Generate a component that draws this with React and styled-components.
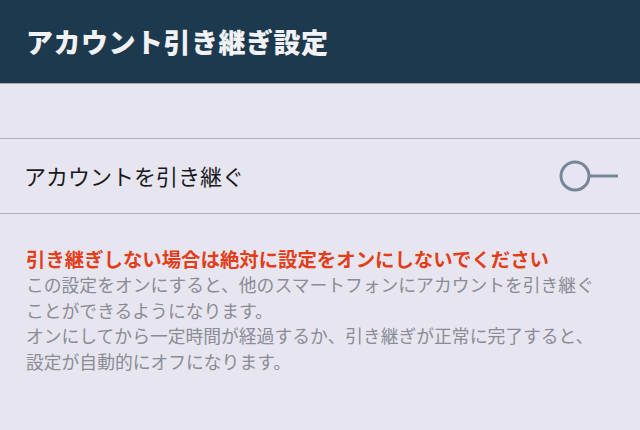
import React, { useState } from "react";
import styled, { createGlobalStyle } from "styled-components";

const GlobalStyle = createGlobalStyle`
  html, body {
    margin: 0;
    padding: 0;
    background: #e7e5ef;
  }
  body {
    font-family: "Noto Sans CJK JP", "Noto Sans", sans-serif;
  }
`;

const Page = styled.div`
  width: 640px;
  height: 430px;
  background: #e7e5ef;
  overflow: hidden;
`;

const Header = styled.header`
  height: 84px;
  background: #1c394d;
  border-bottom: 1px solid #a9a9b6;
  display: flex;
  align-items: center;
  padding: 0 26px;
  box-sizing: border-box;
`;

const Title = styled.h1`
  margin: 0;
  color: #f1f1f6;
  font-size: 27px;
  font-weight: 900;
  letter-spacing: 0.5px;
  line-height: 1;
`;

const Spacer = styled.div`
  height: 54px;
`;

const Row = styled.div`
  height: 74px;
  border-top: 1px solid #b3b3bf;
  border-bottom: 1px solid #b3b3bf;
  display: flex;
  align-items: center;
  justify-content: space-between;
  padding: 0 20px 0 24px;
`;

const Label = styled.span`
  color: #1a1a1e;
  font-size: 22px;
  font-weight: 400;
  line-height: 1;
  padding-bottom: 3px;
`;

const ToggleButton = styled.button`
  border: none;
  background: transparent;
  padding: 0;
  cursor: pointer;
  display: flex;
  align-items: center;
`;

const Notes = styled.div`
  padding: 33px 26px 0;
`;

const Warning = styled.p`
  margin: 0 0 1px;
  color: #e23e1a;
  font-size: 19.4px;
  font-weight: 700;
  line-height: 24px;
`;

const Body = styled.p`
  margin: 0;
  color: #8b8b96;
  font-size: 17.8px;
  line-height: 25.6px;
`;

const Toggle = ({ on, onClick }) => (
  <ToggleButton onClick={onClick} aria-pressed={on}>
    <svg width="62" height="34" viewBox="0 0 62 34">
      <circle cx="17" cy="17" r="14" fill="none" stroke="#77879a" strokeWidth="3" />
      <line x1="31" y1="17" x2="60" y2="17" stroke="#77879a" strokeWidth="3" />
    </svg>
  </ToggleButton>
);

export default function App() {
  const [on, setOn] = useState(false);
  return (
    <Page>
      <GlobalStyle />
      <Header>
        <Title>アカウント引き継ぎ設定</Title>
      </Header>
      <Spacer />
      <Row>
        <Label>アカウントを引き継ぐ</Label>
        <Toggle on={on} onClick={() => setOn(!on)} />
      </Row>
      <Notes>
        <Warning>引き継ぎしない場合は絶対に設定をオンにしないでください</Warning>
        <Body>
          この設定をオンにすると、他のスマートフォンにアカウントを引き継ぐ
          <br />
          ことができるようになります。
          <br />
          オンにしてから一定時間が経過するか、引き継ぎが正常に完了すると、
          <br />
          設定が自動的にオフになります。
        </Body>
      </Notes>
    </Page>
  );
}
